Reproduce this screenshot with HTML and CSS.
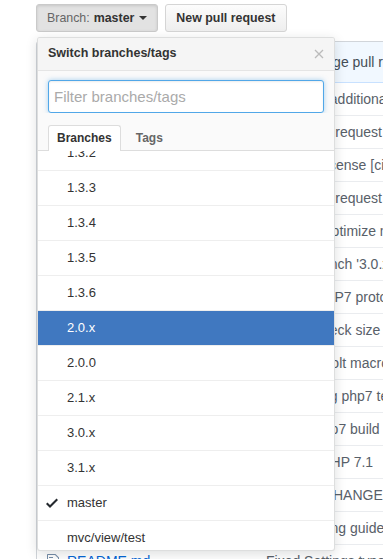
FILE: index.html
```html
<!DOCTYPE html>
<html lang="en">
<head>
    <meta charset="UTF-8">
    <meta name="viewport" content="width=device-width, initial-scale=1.0">
    <title>Switch branches/tags</title>
    <link rel="stylesheet" href="styles.css">
</head>
<body>

    <div class="repo">
        <div class="file-nav">
            <div class="branch-select">
                <button class="btn branch-btn">
                    <span class="btn-label">Branch:</span>
                    <span class="branch-name">master</span>
                    <span class="caret"></span>
                </button>

                <!-- Open branch menu, lies over the file list -->
                <div class="select-menu">
                    <div class="menu-header">
                        <span class="menu-title">Switch branches/tags</span>
                        <svg class="close-icon" width="10" height="10" viewBox="0 0 10 10">
                            <path d="M1 1L9 9M9 1L1 9" stroke="#bbb" stroke-width="1.3" fill="none"/>
                        </svg>
                    </div>
                    <div class="menu-filters">
                        <input class="filter-input" type="text" placeholder="Filter branches/tags">
                    </div>
                    <div class="menu-tabs">
                        <span class="menu-tab selected">Branches</span>
                        <span class="menu-tab">Tags</span>
                    </div>
                    <div class="menu-list">
                        <div class="menu-items">
                            <div class="menu-item"><span class="check-slot"></span>1.3.2</div>
                            <div class="menu-item"><span class="check-slot"></span>1.3.3</div>
                            <div class="menu-item"><span class="check-slot"></span>1.3.4</div>
                            <div class="menu-item"><span class="check-slot"></span>1.3.5</div>
                            <div class="menu-item"><span class="check-slot"></span>1.3.6</div>
                            <div class="menu-item focus"><span class="check-slot"></span>2.0.x</div>
                            <div class="menu-item"><span class="check-slot"></span>2.0.0</div>
                            <div class="menu-item"><span class="check-slot"></span>2.1.x</div>
                            <div class="menu-item"><span class="check-slot"></span>3.0.x</div>
                            <div class="menu-item"><span class="check-slot"></span>3.1.x</div>
                            <div class="menu-item">
                                <span class="check-slot">
                                    <svg width="12" height="16" viewBox="0 0 12 16">
                                        <path d="M12 5l-8 8-4-4 1.5-1.5L4 10l6.5-6.5L12 5z" fill="#24292e"/>
                                    </svg>
                                </span>master
                            </div>
                            <div class="menu-item"><span class="check-slot"></span>mvc/view/test</div>
                        </div>
                    </div>
                </div>
            </div>
            <button class="btn">New pull request</button>
        </div>

        <div class="file-wrap">
            <div class="commit-tease">
                <span class="avatar"></span>
                <span class="tease-author">sergeyklay</span>
                <span class="tease-message">Merge pull request #12812 from sergeyklay/3.1.x</span>
            </div>

            <div class="file-row"><svg class="dir-icon" width="14" height="16" viewBox="0 0 14 16"><path d="M13 4H7V3c0-.66-.31-1-1-1H1c-.55 0-1 .45-1 1v10c0 .55.45 1 1 1h12c.55 0 1-.45 1-1V5c0-.55-.45-1-1-1zM6 4H1V3h5v1z"/></svg><span class="file-name">.github</span><span class="file-message">Removed additional checks</span></div>
            <div class="file-row"><svg class="dir-icon" width="14" height="16" viewBox="0 0 14 16"><path d="M13 4H7V3c0-.66-.31-1-1-1H1c-.55 0-1 .45-1 1v10c0 .55.45 1 1 1h12c.55 0 1-.45 1-1V5c0-.55-.45-1-1-1zM6 4H1V3h5v1z"/></svg><span class="file-name">build</span><span class="file-message">Merge pull request #12805</span></div>
            <div class="file-row"><svg class="dir-icon" width="14" height="16" viewBox="0 0 14 16"><path d="M13 4H7V3c0-.66-.31-1-1-1H1c-.55 0-1 .45-1 1v10c0 .55.45 1 1 1h12c.55 0 1-.45 1-1V5c0-.55-.45-1-1-1zM6 4H1V3h5v1z"/></svg><span class="file-name">config</span><span class="file-message">Updated license [ci skip]</span></div>
            <div class="file-row"><svg class="dir-icon" width="14" height="16" viewBox="0 0 14 16"><path d="M13 4H7V3c0-.66-.31-1-1-1H1c-.55 0-1 .45-1 1v10c0 .55.45 1 1 1h12c.55 0 1-.45 1-1V5c0-.55-.45-1-1-1zM6 4H1V3h5v1z"/></svg><span class="file-name">ext</span><span class="file-message">Merge pull request #12798</span></div>
            <div class="file-row"><svg class="dir-icon" width="14" height="16" viewBox="0 0 14 16"><path d="M13 4H7V3c0-.66-.31-1-1-1H1c-.55 0-1 .45-1 1v10c0 .55.45 1 1 1h12c.55 0 1-.45 1-1V5c0-.55-.45-1-1-1zM6 4H1V3h5v1z"/></svg><span class="file-name">optimizers</span><span class="file-message">Trying to optimize memory usage</span></div>
            <div class="file-row"><svg class="dir-icon" width="14" height="16" viewBox="0 0 14 16"><path d="M13 4H7V3c0-.66-.31-1-1-1H1c-.55 0-1 .45-1 1v10c0 .55.45 1 1 1h12c.55 0 1-.45 1-1V5c0-.55-.45-1-1-1zM6 4H1V3h5v1z"/></svg><span class="file-name">phalcon</span><span class="file-message">Merge branch '3.0.x' into 3.1.x</span></div>
            <div class="file-row"><svg class="dir-icon" width="14" height="16" viewBox="0 0 14 16"><path d="M13 4H7V3c0-.66-.31-1-1-1H1c-.55 0-1 .45-1 1v10c0 .55.45 1 1 1h12c.55 0 1-.45 1-1V5c0-.55-.45-1-1-1zM6 4H1V3h5v1z"/></svg><span class="file-name">php-tests</span><span class="file-message">Update PHP7 prototypes</span></div>
            <div class="file-row"><svg class="dir-icon" width="14" height="16" viewBox="0 0 14 16"><path d="M13 4H7V3c0-.66-.31-1-1-1H1c-.55 0-1 .45-1 1v10c0 .55.45 1 1 1h12c.55 0 1-.45 1-1V5c0-.55-.45-1-1-1zM6 4H1V3h5v1z"/></svg><span class="file-name">scripts</span><span class="file-message">Update check size of arrays</span></div>
            <div class="file-row"><svg class="dir-icon" width="14" height="16" viewBox="0 0 14 16"><path d="M13 4H7V3c0-.66-.31-1-1-1H1c-.55 0-1 .45-1 1v10c0 .55.45 1 1 1h12c.55 0 1-.45 1-1V5c0-.55-.45-1-1-1zM6 4H1V3h5v1z"/></svg><span class="file-name">tests</span><span class="file-message">Refactor Volt macros</span></div>
            <div class="file-row"><svg class="dir-icon" width="14" height="16" viewBox="0 0 14 16"><path d="M13 4H7V3c0-.66-.31-1-1-1H1c-.55 0-1 .45-1 1v10c0 .55.45 1 1 1h12c.55 0 1-.45 1-1V5c0-.55-.45-1-1-1zM6 4H1V3h5v1z"/></svg><span class="file-name">unit-tests</span><span class="file-message">Refactoring php7 tests</span></div>
            <div class="file-row"><svg class="file-icon" width="12" height="16" viewBox="0 0 12 16"><path d="M6 5H2V4h4v1zM2 8h7V7H2v1zm0 2h7V9H2v1zm0 2h7v-1H2v1zm10-7.5V14c0 .55-.45 1-1 1H1c-.55 0-1-.45-1-1V2c0-.55.45-1 1-1h7.5L12 4.5zM11 5L8 2H1v12h10V5z"/></svg><span class="file-name">.gitignore</span><span class="file-message">Update php7 build</span></div>
            <div class="file-row"><svg class="file-icon" width="12" height="16" viewBox="0 0 12 16"><path d="M6 5H2V4h4v1zM2 8h7V7H2v1zm0 2h7V9H2v1zm0 2h7v-1H2v1zm10-7.5V14c0 .55-.45 1-1 1H1c-.55 0-1-.45-1-1V2c0-.55.45-1 1-1h7.5L12 4.5zM11 5L8 2H1v12h10V5z"/></svg><span class="file-name">.travis.yml</span><span class="file-message">Enabled PHP 7.1</span></div>
            <div class="file-row"><svg class="file-icon" width="12" height="16" viewBox="0 0 12 16"><path d="M6 5H2V4h4v1zM2 8h7V7H2v1zm0 2h7V9H2v1zm0 2h7v-1H2v1zm10-7.5V14c0 .55-.45 1-1 1H1c-.55 0-1-.45-1-1V2c0-.55.45-1 1-1h7.5L12 4.5zM11 5L8 2H1v12h10V5z"/></svg><span class="file-name">CHANGELOG.md</span><span class="file-message">Updated CHANGELOG.md</span></div>
            <div class="file-row"><svg class="file-icon" width="12" height="16" viewBox="0 0 12 16"><path d="M6 5H2V4h4v1zM2 8h7V7H2v1zm0 2h7V9H2v1zm0 2h7v-1H2v1zm10-7.5V14c0 .55-.45 1-1 1H1c-.55 0-1-.45-1-1V2c0-.55.45-1 1-1h7.5L12 4.5zM11 5L8 2H1v12h10V5z"/></svg><span class="file-name">CONTRIBUTING.md</span><span class="file-message">Reformatting guidelines</span></div>
            <div class="file-row"><svg class="file-icon" width="12" height="16" viewBox="0 0 12 16"><path d="M6 5H2V4h4v1zM2 8h7V7H2v1zm0 2h7V9H2v1zm0 2h7v-1H2v1zm10-7.5V14c0 .55-.45 1-1 1H1c-.55 0-1-.45-1-1V2c0-.55.45-1 1-1h7.5L12 4.5zM11 5L8 2H1v12h10V5z"/></svg><span class="file-name">README.md</span><span class="file-message">Fixed Settings typo</span></div>
        </div>
    </div>

</body>
</html>
```

FILE: styles.css
```css
* {
    box-sizing: border-box;
}

body {
    margin: 0;
    overflow: hidden;
    background-color: #fff;
    font-family: "Liberation Sans", Helvetica, Arial, sans-serif;
    font-size: 13px;
    color: #333;
}

.repo {
    padding: 4px 0 0 36px;
}

/* Buttons above the file list */
.file-nav {
    display: flex;
    gap: 7px;
}

.branch-select {
    position: relative;
}

.btn {
    height: 28px;
    padding: 0 10px;
    border: 1px solid #d5d5d5;
    border-radius: 3px;
    background-image: linear-gradient(#fcfcfc, #eee);
    font-family: inherit;
    font-size: 12.4px;
    font-weight: bold;
    color: #333;
    line-height: 26px;
    white-space: nowrap;
}

.branch-btn {
    display: flex;
    align-items: center;
    background-image: none;
    background-color: #e2e2e2;
    border-color: #cacaca;
    box-shadow: inset 0 1px 3px rgba(0, 0, 0, 0.12);
}

.btn-label {
    font-weight: normal;
    color: #666;
    margin-right: 4px;
}

.caret {
    margin-left: 5px;
    border-top: 4px solid #333;
    border-left: 4px solid transparent;
    border-right: 4px solid transparent;
}

/* Branch menu */
.select-menu {
    position: absolute;
    top: 33px;
    left: 1px;
    z-index: 10;
    width: 298px;
    background-color: #fff;
    border: 1px solid rgba(27, 31, 35, 0.15);
    border-radius: 3px;
    box-shadow: 0 3px 12px rgba(27, 31, 35, 0.15);
    overflow: hidden;
}

.menu-header {
    display: flex;
    align-items: center;
    justify-content: space-between;
    padding: 7px 10px 8px;
    line-height: 17px;
    background-color: #f5f5f5;
    border-bottom: 1px solid #e5e5e5;
}

.menu-title {
    font-size: 12.5px;
    font-weight: bold;
    color: #333;
}

.menu-filters {
    padding: 9px 10px 0;
    background-color: #fafafa;
}

.filter-input {
    display: block;
    width: 100%;
    height: 33px;
    padding: 0 5px;
    border: 1px solid #51a7e8;
    border-radius: 3px;
    outline: none;
    box-shadow: inset 0 1px 2px rgba(0, 0, 0, 0.075), 0 0 5px rgba(81, 167, 232, 0.5);
    font-family: inherit;
    font-size: 15px;
    color: #333;
}

.filter-input::placeholder {
    color: #aaa;
}

.menu-tabs {
    display: flex;
    gap: 6px;
    padding: 12px 10px 0;
    background-color: #fafafa;
    border-bottom: 1px solid #ddd;
}

.menu-tab {
    height: 26px;
    margin-bottom: -1px;
    padding: 0 8px;
    border: 1px solid transparent;
    border-bottom: 0;
    border-radius: 3px 3px 0 0;
    font-size: 12px;
    font-weight: bold;
    line-height: 25px;
    color: #666;
}

.menu-tab.selected {
    color: #333;
    background-color: #fff;
    border-color: #ddd;
}

/* list is scrolled a little, so 1.3.2 is cut at the top */
.menu-list {
    height: 399px;
    overflow: hidden;
}

.menu-items {
    margin-top: -15px;
}

.menu-item {
    display: flex;
    align-items: center;
    padding: 8px;
    line-height: 18px;
    border-bottom: 1px solid #eee;
    color: #333;
}

.menu-item.focus {
    background-color: #4078c0;
    color: #fff;
}

.check-slot {
    display: flex;
    width: 21px;
    height: 18px;
    align-items: center;
}

/* File list behind the menu */
.file-wrap {
    width: 640px;
    margin-top: 9px;
    border: 1px solid #d1d5da;
    border-radius: 3px;
    font-size: 14px;
}

.commit-tease {
    display: flex;
    align-items: center;
    height: 41px;
    padding: 0 10px;
    background-color: #f1f8ff;
    border-bottom: 1px solid #c8e1ff;
    color: #444d56;
    white-space: nowrap;
}

.avatar {
    width: 20px;
    height: 20px;
    margin-right: 8px;
    border-radius: 3px;
    background-color: #c6cbd1;
}

.tease-author {
    width: 234px;
    font-weight: bold;
    color: #24292e;
}

.file-row {
    display: flex;
    align-items: center;
    height: 33px;
    padding: 0 10px;
    border-top: 1px solid #eaecef;
    white-space: nowrap;
}

.commit-tease + .file-row {
    height: 32px;
    border-top: 0;
}

.dir-icon {
    fill: #79b8ff;
    margin-right: 6px;
}

.file-icon {
    fill: rgba(3, 47, 98, 0.55);
    margin-right: 8px;
}

.file-name {
    width: 199px;
    color: #0366d6;
}

.file-message {
    color: #586069;
}
```
